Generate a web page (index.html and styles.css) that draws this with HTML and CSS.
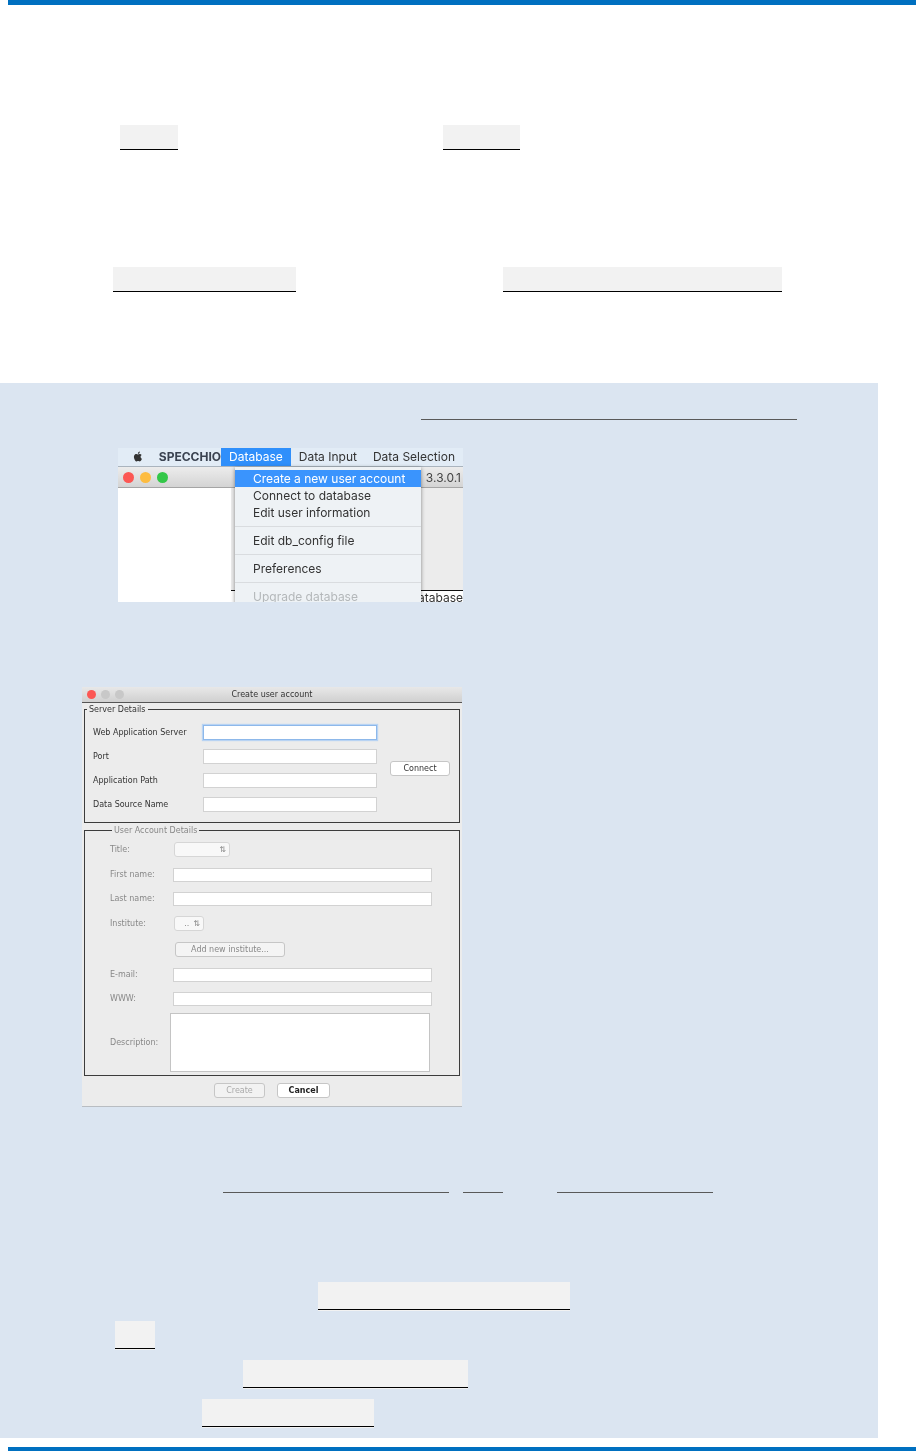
FILE: index.html
```html
<!DOCTYPE html>
<html lang="en">
<head>
  <meta charset="UTF-8">
  <meta name="viewport" content="width=device-width, initial-scale=1.0">
  <title>Create a SPECCHIO user account</title>
  <link rel="stylesheet" href="styles.css">
</head>
<body>

  <div class="page-rule"></div>

  <!-- Blanks above the shaded box -->
  <div class="blank-row row-name">
    <div class="blank blank-name"></div>
    <div class="blank blank-date"></div>
  </div>
  <div class="blank-row row-course">
    <div class="blank blank-course"></div>
    <div class="blank blank-group"></div>
  </div>

  <!-- Shaded box -->
  <div class="panel">
    <div class="link-line link-top"></div>

    <!-- Database menu screenshot -->
    <div class="shot-menu">
      <div class="menubar">
        <svg class="apple" viewBox="0 0 24 24"><path d="M12.152 6.896c-.948 0-2.415-1.078-3.96-1.04-2.04.027-3.91 1.183-4.961 3.014-2.117 3.675-.546 9.103 1.519 12.09 1.013 1.454 2.208 3.09 3.792 3.039 1.52-.065 2.09-.987 3.935-.987 1.831 0 2.35.987 3.96.948 1.637-.026 2.676-1.48 3.676-2.948 1.156-1.688 1.636-3.325 1.662-3.415-.039-.013-3.182-1.221-3.22-4.857-.026-3.04 2.48-4.494 2.597-4.559-1.429-2.09-3.623-2.324-4.39-2.376-2-.156-3.675 1.09-4.61 1.09zM15.53 3.83c.843-1.012 1.4-2.427 1.245-3.83-1.207.052-2.662.805-3.532 1.818-.78.896-1.454 2.338-1.273 3.714 1.338.104 2.715-.688 3.559-1.701"/></svg>
        <span class="app-name">SPECCHIO</span>
        <span class="menu-title active">Database</span>
        <span class="menu-title">Data Input</span>
        <span class="menu-title">Data Selection</span>
      </div>
      <div class="app-titlebar">
        <div class="lights">
          <span class="light red"></span>
          <span class="light yellow"></span>
          <span class="light green"></span>
        </div>
        <span class="version">3.3.0.1</span>
      </div>
      <div class="app-body">
        <div class="app-left"></div>
        <div class="app-right">
          <div class="app-status">Database</div>
        </div>
      </div>

      <!-- Open dropdown -->
      <div class="dropdown">
        <div class="drop-item selected">Create a new user account</div>
        <div class="drop-item">Connect to database</div>
        <div class="drop-item">Edit user information</div>
        <div class="drop-sep"></div>
        <div class="drop-item">Edit db_config file</div>
        <div class="drop-sep"></div>
        <div class="drop-item">Preferences</div>
        <div class="drop-sep"></div>
        <div class="drop-item disabled">Upgrade database</div>
      </div>
    </div>

    <!-- Create user account dialog screenshot -->
    <div class="shot-dialog">
      <div class="dlg-title">
        <div class="dlg-lights">
          <span class="dlg-light on"></span>
          <span class="dlg-light"></span>
          <span class="dlg-light"></span>
        </div>
        <span>Create user account</span>
      </div>

      <fieldset class="group">
        <legend>Server Details</legend>
        <div class="server-grid">
          <label>Web Application Server</label>
          <div class="input focused"></div>
          <div class="connect-cell"><span class="btn btn-connect">Connect</span></div>
          <label>Port</label>
          <div class="input"></div>
          <label>Application Path</label>
          <div class="input"></div>
          <label>Data Source Name</label>
          <div class="input"></div>
        </div>
      </fieldset>

      <fieldset class="group group-off">
        <legend>User Account Details</legend>
        <div class="acct-row tall">
          <label>Title:</label>
          <div class="select select-title"><span class="arrows">&#8645;</span></div>
        </div>
        <div class="acct-row">
          <label>First name:</label>
          <div class="input input-wide"></div>
        </div>
        <div class="acct-row">
          <label>Last name:</label>
          <div class="input input-wide"></div>
        </div>
        <div class="acct-row tall">
          <label>Institute:</label>
          <div class="select select-inst"><span>..</span><span class="arrows">&#8645;</span></div>
        </div>
        <div class="acct-row tall">
          <label></label>
          <span class="btn btn-add">Add new institute...</span>
        </div>
        <div class="acct-row">
          <label>E-mail:</label>
          <div class="input input-wide"></div>
        </div>
        <div class="acct-row">
          <label>WWW:</label>
          <div class="input input-wide"></div>
        </div>
        <div class="acct-row desc-row">
          <label>Description:</label>
          <div class="textarea"></div>
        </div>
      </fieldset>

      <div class="dlg-actions">
        <span class="btn btn-create">Create</span>
        <span class="btn btn-cancel">Cancel</span>
      </div>
    </div>

    <div class="link-row">
      <div class="link-line link-a"></div>
      <div class="link-line link-b"></div>
      <div class="link-line link-c"></div>
    </div>

    <div class="blank-row shaded row-1"><div class="blank blank-1"></div></div>
    <div class="blank-row shaded row-2"><div class="blank blank-2"></div></div>
    <div class="blank-row shaded row-3"><div class="blank blank-3"></div></div>
    <div class="blank-row shaded row-4"><div class="blank blank-4"></div></div>
  </div>

  <div class="page-rule page-rule-bottom"></div>

</body>
</html>
```

FILE: styles.css
```css
/* Reset */
* {
  margin: 0;
  padding: 0;
  box-sizing: border-box;
}

body {
  width: 916px;
  height: 1451px;
  overflow: hidden;
  background-color: #fff;
  font-family: "Liberation Sans", Arial, sans-serif;
}

/* Blue rules at top and bottom of the page */
.page-rule {
  height: 5px;
  margin-left: 8px;
  background-color: #0070c0;
}
.page-rule-bottom {
  height: 4px;
  margin-top: 9px;
}

/* Fill-in blanks */
.blank-row {
  display: flex;
}
.blank {
  height: 25px;
  background-color: #f2f2f2;
  border-bottom: 1px solid #000;
}
.row-name {
  margin-top: 120px;
  padding-left: 120px;
}
.blank-name { width: 58px; }
.blank-date { width: 77px; margin-left: 265px; }
.row-course {
  margin-top: 117px;
  padding-left: 113px;
}
.blank-course { width: 183px; }
.blank-group { width: 279px; margin-left: 207px; }

/* Shaded box */
.panel {
  width: 878px;
  height: 1055px;
  margin-top: 91px;
  padding-top: 36px;
  background-color: #dbe5f1;
}
.link-line {
  height: 1px;
  background-color: #595959;
}
.link-top {
  width: 376px;
  margin-left: 421px;
}

/* Menu screenshot */
.shot-menu {
  position: relative;
  width: 345px;
  height: 154px;
  margin-top: 28px;
  margin-left: 118px;
  overflow: hidden;
  font-family: Inter, "Liberation Sans", sans-serif;
  font-size: 12px;
  color: #333;
  filter: blur(0.35px);
}
.menubar {
  display: flex;
  align-items: center;
  height: 19px;
  padding-bottom: 1px;
  background-color: #e2ecf6;
  border-bottom: 1px solid #aab4be;
  white-space: nowrap;
}
.apple {
  width: 14px;
  height: 15px;
  margin-left: 15px;
  fill: #333;
}
.app-name {
  width: 72px;
  margin-left: 16px;
  font-weight: 700;
  color: #3a4250;
}
.menu-title {
  padding: 0 8px;
  line-height: 18px;
}
.menu-title.active {
  width: 70px;
  background-color: #2f8ffb;
  color: #fff;
}
.app-titlebar {
  display: flex;
  justify-content: space-between;
  align-items: center;
  height: 21px;
  padding: 0 2px 0 5px;
  background: linear-gradient(#ececec, #d4d4d4);
  border-bottom: 1px solid #a5a5a5;
}
.lights {
  display: flex;
  gap: 6px;
}
.light {
  width: 11px;
  height: 11px;
  border-radius: 50%;
}
.light.red { background-color: #fc5753; }
.light.yellow { background-color: #fdbc40; }
.light.green { background-color: #33c748; }
.version {
  color: #444;
}
.app-body {
  display: flex;
  height: 115px;
}
.app-left {
  width: 117px;
  background-color: #fff;
}
.app-right {
  flex: 1;
  display: flex;
  flex-direction: column;
  justify-content: flex-end;
  background-color: #ececec;
}
.app-status {
  height: 13px;
  padding-left: 178px;
  border-top: 1px solid #111;
  background-color: #fff;
  line-height: 13px;
}

/* Dropdown over the app window */
.dropdown {
  position: absolute;
  top: 19px;
  left: 117px;
  width: 186px;
  height: 140px;
  padding-top: 3px;
  background-color: #eef2f5;
  box-shadow: 0 1px 4px rgba(0, 0, 0, 0.45);
}
.drop-item {
  height: 17px;
  padding-left: 18px;
  line-height: 17px;
  white-space: nowrap;
}
.drop-item.selected {
  background-color: #3a94fd;
  color: #fff;
}
.drop-item.disabled {
  color: #b4b8ba;
}
.drop-sep {
  height: 1px;
  margin: 5px 0;
  background-color: #d9dcdf;
}

/* Dialog screenshot */
.shot-dialog {
  display: flex;
  flex-direction: column;
  width: 380px;
  height: 420px;
  margin-top: 85px;
  margin-left: 82px;
  background-color: #ececec;
  border-bottom: 1px solid #b9bdc2;
  font-family: "DejaVu Sans", sans-serif;
  font-size: 8px;
  color: #333;
  filter: blur(0.35px);
}
.dlg-title {
  position: relative;
  flex: none;
  height: 16px;
  text-align: center;
  line-height: 15px;
  background: linear-gradient(#e8e8e8, #d0d0d0);
  border-bottom: 1px solid #555;
}
.dlg-lights {
  position: absolute;
  top: 3px;
  left: 5px;
  display: flex;
  gap: 5px;
}
.dlg-light {
  width: 9px;
  height: 9px;
  border-radius: 50%;
  background-color: #c8c8c8;
}
.dlg-light.on {
  background-color: #fc5753;
}

/* Group boxes */
.group {
  flex: none;
  margin: 1px 2px 0;
  border: 1px solid #3c3c3c;
}
.group legend {
  margin-left: 2px;
  padding: 0 2px;
  line-height: 11px;
}
.group-off {
  margin-top: 2px;
  padding: 5px 0 3px 25px;
  color: #888;
}
.server-grid {
  display: grid;
  grid-template-columns: 110px 174px 60px;
  grid-auto-rows: 15px;
  column-gap: 0;
  row-gap: 9px;
  padding: 10px 0 10px 8px;
  align-items: center;
}
.connect-cell {
  grid-column: 3;
  grid-row: 1 / span 4;
  margin-left: 13px;
  width: 60px;
  align-self: center;
}
.input {
  height: 14px;
  background-color: #fff;
  border: 1px solid #d2d2d2;
}
.server-grid .input {
  height: 15px;
}
.input.focused {
  border-color: #8db8ea;
  box-shadow: 0 0 1px 1px #b8d3f3;
}
.input-wide {
  width: 259px;
}
.acct-row {
  display: flex;
  align-items: center;
  height: 15px;
  margin-bottom: 9px;
}
.acct-row.tall {
  height: 17px;
}
.acct-row label {
  flex: none;
  width: 63px;
}
.desc-row {
  height: 59px;
  margin-top: -2px;
  margin-bottom: 0;
}
.desc-row label {
  width: 60px;
}
.textarea {
  width: 260px;
  height: 59px;
  background-color: #fff;
  border: 1px solid #c4c4c4;
}
.select {
  display: flex;
  justify-content: flex-end;
  align-items: center;
  gap: 4px;
  height: 15px;
  padding-right: 3px;
  background-color: #f8f8f8;
  border: 1px solid #d6d6d6;
  border-radius: 3px;
  margin-left: 1px;
}
.select-title { width: 56px; }
.select-inst { width: 30px; }
.arrows {
  font-size: 8px;
  line-height: 10px;
}
.btn {
  display: block;
  height: 15px;
  text-align: center;
  line-height: 13px;
  background-color: #fff;
  border: 1px solid #c6c6c6;
  border-radius: 3px;
}
.btn-connect { width: 60px; }
.btn-add {
  width: 110px;
  margin-left: 2px;
  background-color: #f4f4f4;
  color: #888;
}
.dlg-actions {
  display: flex;
  justify-content: center;
  gap: 12px;
  padding-top: 7px;
}
.btn-create {
  width: 51px;
  background-color: #f2f2f2;
  color: #aaa;
}
.btn-cancel {
  width: 53px;
  font-weight: 700;
  color: #222;
}

/* Underlined links under the dialog */
.link-row {
  display: flex;
  margin-top: 85px;
  padding-left: 223px;
}
.link-a { width: 226px; }
.link-b { width: 40px; margin-left: 14px; }
.link-c { width: 156px; margin-left: 54px; }

/* Blanks at the bottom of the box */
.shaded .blank {
  height: 28px;
  box-shadow: 0 1px #f2f2f2;
}
.row-1 { margin-top: 89px; padding-left: 318px; }
.row-2 { margin-top: 11px; padding-left: 115px; }
.row-3 { margin-top: 11px; padding-left: 243px; }
.row-4 { margin-top: 11px; padding-left: 202px; }
.blank-1 { width: 252px; }
.blank-2 { width: 40px; }
.blank-3 { width: 225px; }
.blank-4 { width: 172px; }
```
